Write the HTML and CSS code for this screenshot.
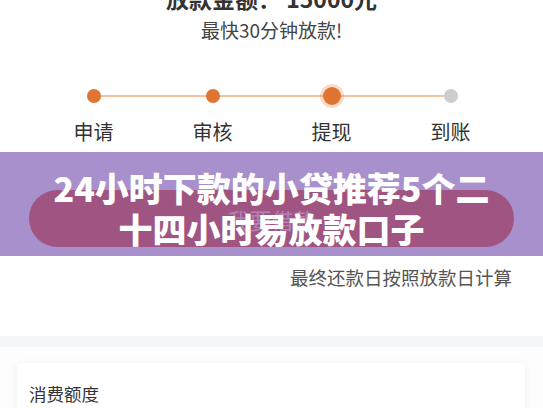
FILE: index.html
```html
<!DOCTYPE html>
<html lang="zh-CN">
<head>
  <meta charset="UTF-8" />
  <meta name="viewport" content="width=device-width, initial-scale=1" />
  <title>24小时下款的小贷推荐5个二十四小时易放款口子</title>
  <link rel="stylesheet" href="styles.css">
</head>
<body>
  <section class="loan">
    <p class="amount">放款金额： 15000元</p>
    <p class="tip">最快30分钟放款!</p>

    <div class="steps">
      <div class="track">
        <span class="line"></span>
        <span class="step"><i class="dot"></i></span>
        <span class="step"><i class="dot"></i></span>
        <span class="step"><i class="dot current"></i></span>
        <span class="step"><i class="dot todo"></i></span>
      </div>
      <div class="labels">
        <span>申请</span>
        <span>审核</span>
        <span>提现</span>
        <span>到账</span>
      </div>
    </div>
  </section>

  <section class="band">
    <button class="borrow">我要借款</button>
    <h1 class="title">24小时下款的小贷推荐5个二<br>十四小时易放款口子</h1>
  </section>

  <p class="note">最终还款日按照放款日计算</p>

  <div class="divider"></div>

  <section class="cards">
    <div class="card">
      <h2>消费额度</h2>
    </div>
  </section>
</body>
</html>
```

FILE: styles.css
```css
body {
  margin: 0;
  background-color: #fff;
  color: #333;
  font-family: "Noto Sans CJK SC", "Noto Sans", sans-serif;
  overflow: hidden;
}
p, h1, h2 {
  margin: 0;
}
.loan {
  text-align: center;
}
.amount {
  margin-top: -15px;
  height: 26px;
  line-height: 26px;
  font-size: 23px;
  font-weight: bold;
  color: #333;
}
.tip {
  margin-top: 7px;
  line-height: 24px;
  font-size: 19px;
  color: #444;
}
.steps {
  margin-top: 42px;
  padding: 0 33px 0 34px;
}
.track {
  position: relative;
  display: grid;
  grid-template-columns: repeat(4, 1fr);
  height: 24px;
}
.track .line {
  position: absolute;
  left: 12.5%;
  right: 12.5%;
  top: 11px;
  height: 2px;
  background-color: #f4c19c;
}
.step {
  display: flex;
  align-items: center;
  justify-content: center;
}
.dot {
  position: relative;
  width: 14px;
  height: 14px;
  border-radius: 50%;
  background-color: #e07433;
}
.dot.current {
  width: 18px;
  height: 18px;
  box-shadow: 0 0 0 3px rgba(232, 130, 70, 0.28);
}
.dot.todo {
  background-color: #cdcdcd;
}
.labels {
  display: grid;
  grid-template-columns: repeat(4, 1fr);
  margin-top: 12px;
  line-height: 24px;
  font-size: 20px;
  color: #333;
}
.band {
  position: relative;
  margin-top: 8px;
  height: 104px;
  padding: 38px 29px 0;
  box-sizing: border-box;
  background-color: #a790cb;
}
.borrow {
  display: block;
  width: 100%;
  height: 57px;
  border: none;
  border-radius: 29px;
  background-color: #a05481;
  color: rgba(200, 170, 230, 0.55);
  font-family: inherit;
  font-size: 22px;
}
.title {
  position: absolute;
  top: 15px;
  left: 0;
  right: 0;
  text-align: center;
  font-size: 34px;
  line-height: 41px;
  font-weight: 900;
  color: #fff;
}
.note {
  margin-top: 9px;
  padding-right: 31px;
  text-align: right;
  line-height: 24px;
  font-size: 18.5px;
  color: #555;
}
.divider {
  margin-top: 47px;
  height: 11px;
  background-color: #f5f6f8;
}
.cards {
  padding: 16px 18px 16px 17px;
  background-color: #fdfdfd;
}
.card {
  padding: 19px 12px 20px;
  background-color: #fff;
  border-radius: 4px;
  box-shadow: 0 1px 8px rgba(0, 0, 0, 0.06);
}
.card h2 {
  line-height: 24px;
  font-size: 17.5px;
  font-weight: normal;
  color: #333;
}
```
